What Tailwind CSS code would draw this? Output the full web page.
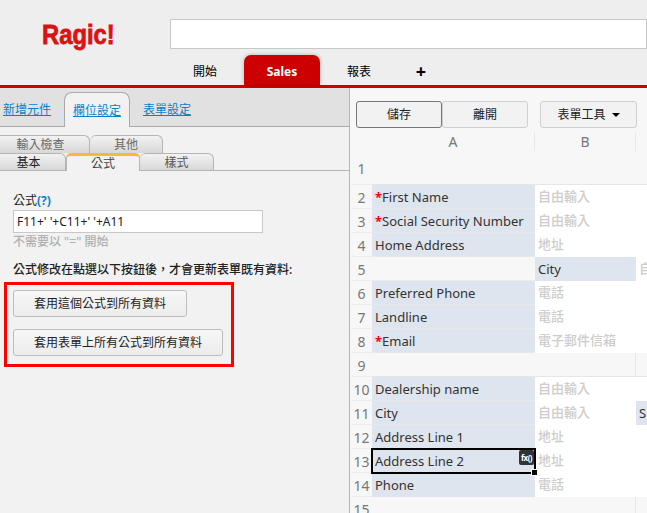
<!DOCTYPE html>
<html>
<head>
<meta charset="utf-8">
<script src="https://cdn.jsdelivr.net/npm/@tailwindcss/browser@4"></script>
</head>
<body class="w-[647px] h-[513px] overflow-hidden bg-[#f2f2f2] text-[13px] text-[#222] font-['Noto_Sans','Noto_Sans_CJK_TC',sans-serif]">
<header class="h-[88px] bg-[#eeeeee] border-b-[3px] border-[#cc0000] flex flex-col">
  <div class="h-[55px] flex items-start shrink-0">
    <div class="w-[170px] pt-[15px] pl-[42px] text-[28px] leading-[40px] font-bold text-[#dd1111] font-['Liberation_Sans',sans-serif] [-webkit-text-stroke:0.8px_#dd1111]"><span class="inline-block origin-left scale-x-[0.85]">Ragic!</span></div>
    <div class="mt-[19px] h-[30px] flex-1 bg-white border border-[#c8c8c8]"></div>
  </div>
  <nav class="flex items-stretch h-[30px] text-[12px] leading-[34px] text-black">
    <div class="ml-[193px] w-[24px] text-center whitespace-nowrap">開始</div>
    <div class="ml-[27px] w-[76px] bg-[#cc0000] rounded-t-[7px] text-white font-bold text-center shadow-[0_0_4px_rgba(0,0,0,0.25)]">Sales</div>
    <div class="ml-[27px] w-[24px] text-center whitespace-nowrap">報表</div>
    <div class="ml-[44px] w-[12px] text-center font-bold text-[18px] leading-[32px]">+</div>
  </nav>
</header>
<main class="flex h-[425px]">
  <aside class="w-[350px] shrink-0 border-r border-[#b5b5b5] flex flex-col">
    <div class="h-[39px] bg-[#e1e1e1] border-b border-[#aaaaaa] flex items-end text-[12px] shrink-0">
      <a class="ml-[3px] w-[48px] mb-[7px] text-[#0b7fc9] underline whitespace-nowrap">新增元件</a>
      <div class="ml-[13px] w-[66px] h-[35px] -mb-px bg-[#f2f2f2] border border-b-0 border-[#aaaaaa] rounded-t-[8px] flex items-center justify-center pt-[2px]">
        <a class="text-[#0b7fc9] underline whitespace-nowrap">欄位設定</a>
      </div>
      <a class="ml-[13px] w-[48px] mb-[7px] text-[#0b7fc9] underline whitespace-nowrap">表單設定</a>
    </div>
    <div class="pt-[8px] text-[12px] leading-[18px] shrink-0">
      <div class="flex h-[18px] text-[#666]">
        <div class="w-[90px] pr-[8px] bg-gradient-to-b from-[#f2f2f2] to-[#d8d8d8] border-r border-t border-[#b5b5b5] rounded-tr-[6px] text-center">輸入檢查</div>
        <div class="w-[73px] bg-gradient-to-b from-[#f2f2f2] to-[#d8d8d8] border-r border-t border-[#b5b5b5] rounded-t-[6px] text-center">其他</div>
      </div>
      <div class="flex h-[18px] border-b border-[#b5b5b5] text-[#444]">
        <div class="w-[66px] pr-[8px] bg-gradient-to-b from-[#f2f2f2] to-[#d8d8d8] border-r border-t border-[#b5b5b5] rounded-tr-[6px] text-center text-[#222]">基本</div>
        <div class="w-[74px] h-[18px] bg-[#f2f2f2] border-x border-[#b5b5b5] border-t-[3px] border-t-[#f5b942] rounded-t-[5px] text-center leading-[15px]">公式</div>
        <div class="w-[74px] bg-gradient-to-b from-[#f2f2f2] to-[#d8d8d8] border-r border-t border-[#b5b5b5] rounded-t-[6px] text-center text-[#555]">樣式</div>
      </div>
    </div>
    <div class="pl-[13px] pt-[22px] text-[12px] leading-[16px]">
      <div class="h-[16px]">公式<span class="text-[#0b7fc9] font-bold">(?)</span></div>
      <div class="w-[250px] h-[23px] mt-[1px] bg-white border border-[#c8c8c8] pl-[3px] leading-[21px] text-[#222]">F11+' '+C11+' '+A11</div>
      <div class="mt-[1px] text-[#b0b0b0] h-[16px] font-medium">不需要以 "=" 開始</div>
      <div class="mt-[12px] h-[16px] font-medium text-[#222]">公式修改在點選以下按鈕後，才會更新表單既有資料:</div>
      <div class="mt-[4px] -ml-[9px] w-[230px] h-[85px] border-[3px] border-[#ff0000] pl-[6px] pt-[5px] flex flex-col items-start gap-[12px]">
        <button class="w-[174px] h-[27px] bg-gradient-to-b from-[#f7f7f7] to-[#ececec] border border-[#bdbdbd] rounded-[3px] text-[12px]">套用這個公式到所有資料</button>
        <button class="w-[210px] h-[27px] bg-gradient-to-b from-[#f7f7f7] to-[#ececec] border border-[#bdbdbd] rounded-[3px] text-[12px]">套用表單上所有公式到所有資料</button>
      </div>
    </div>
  </aside>
  <section class="flex-1 bg-[#f7f7f7] pl-[1px] min-w-0 overflow-hidden">
    <div class="h-[44px] flex items-start pt-[13px] pl-[5px] text-[12px]">
      <button class="w-[86px] h-[27px] pt-[1px] bg-[#f2f2f2] border border-[#777] rounded-[3px]">儲存</button>
      <button class="w-[86px] h-[27px] pt-[1px] bg-[#f2f2f2] border border-[#cfcfcf] rounded-[3px]">離開</button>
      <button class="ml-[12px] w-[97px] h-[27px] pt-[1px] bg-[#f2f2f2] border border-[#cfcfcf] rounded-[3px] flex items-center justify-center gap-[6px]">表單工具<span class="w-0 h-0 border-x-[4px] border-x-transparent border-t-[4px] border-t-black"></span></button>
    </div>
    <div class="grid grid-cols-[21px_163px_101px_100px] grid-rows-[19px_34px_repeat(14,24px)] text-[13px] leading-[25px] text-[#333] whitespace-nowrap">
      <div></div>
      <div class="border-r border-[#e8e8e8] text-center text-[#777] text-[14px] leading-[19px]">A</div>
      <div class="border-r border-[#e8e8e8] text-center text-[#777] text-[14px] leading-[19px]">B</div>
      <div></div>

      <div class="text-center text-[#777] text-[14px] leading-[36px] border-b border-[#ececec]">1</div>
      <div class="col-span-3 border-b border-[#e6e6e6]"></div>

      <div class="text-center text-[#777] text-[14px] border-b border-[#ececec]">2</div>
      <div class="pl-[3px] bg-[#dfe5ee] border-b border-[#e8e8e8]"><span class="text-[#ff0000] font-bold">*</span>First Name</div>
      <div class="pl-[3px] bg-white text-[#cccccc] font-medium leading-[23px]">自由輸入</div>
      <div class="bg-white"></div>

      <div class="text-center text-[#777] text-[14px] border-b border-[#ececec]">3</div>
      <div class="pl-[3px] bg-[#dfe5ee] border-b border-[#e8e8e8]"><span class="text-[#ff0000] font-bold">*</span>Social Security Number</div>
      <div class="pl-[3px] bg-white text-[#cccccc] font-medium leading-[23px]">自由輸入</div>
      <div class="bg-white"></div>

      <div class="text-center text-[#777] text-[14px] border-b border-[#ececec]">4</div>
      <div class="pl-[3px] bg-[#dfe5ee] border-b border-[#e8e8e8]">Home Address</div>
      <div class="pl-[3px] bg-white text-[#cccccc] font-medium leading-[23px]">地址</div>
      <div class="bg-white"></div>

      <div class="text-center text-[#777] text-[14px] border-b border-[#ececec]">5</div>
      <div class="border-b border-[#ececec]"></div>
      <div class="pl-[3px] bg-[#dfe5ee]">City</div>
      <div class="pl-[3px] bg-white text-[#cccccc] font-medium leading-[23px]">自由輸入</div>

      <div class="text-center text-[#777] text-[14px] border-b border-[#ececec]">6</div>
      <div class="pl-[3px] bg-[#dfe5ee] border-b border-[#e8e8e8]">Preferred Phone</div>
      <div class="pl-[3px] bg-white text-[#cccccc] font-medium leading-[23px]">電話</div>
      <div class="bg-white"></div>

      <div class="text-center text-[#777] text-[14px] border-b border-[#ececec]">7</div>
      <div class="pl-[3px] bg-[#dfe5ee] border-b border-[#e8e8e8]">Landline</div>
      <div class="pl-[3px] bg-white text-[#cccccc] font-medium leading-[23px]">電話</div>
      <div class="bg-white"></div>

      <div class="text-center text-[#777] text-[14px] border-b border-[#ececec]">8</div>
      <div class="pl-[3px] bg-[#dfe5ee] border-b border-[#e8e8e8]"><span class="text-[#ff0000] font-bold">*</span>Email</div>
      <div class="pl-[3px] bg-white text-[#cccccc] font-medium leading-[23px]">電子郵件信箱</div>
      <div class="bg-white"></div>

      <div class="text-center text-[#777] text-[14px] border-b border-[#ececec]">9</div>
      <div class="border-b border-[#e6e6e6]"></div>
      <div class="border-b border-r border-[#e6e6e6]"></div>
      <div class="border-b border-[#e6e6e6]"></div>

      <div class="text-center text-[#777] text-[14px] border-b border-[#ececec]">10</div>
      <div class="pl-[3px] bg-[#dfe5ee] border-b border-[#e8e8e8]">Dealership name</div>
      <div class="pl-[3px] bg-white text-[#cccccc] font-medium leading-[23px]">自由輸入</div>
      <div class="bg-white"></div>

      <div class="text-center text-[#777] text-[14px] border-b border-[#ececec]">11</div>
      <div class="pl-[3px] bg-[#dfe5ee] border-b border-[#e8e8e8]">City</div>
      <div class="pl-[3px] bg-white text-[#cccccc] font-medium leading-[23px]">自由輸入</div>
      <div class="pl-[3px] bg-[#dfe5ee]">S</div>

      <div class="text-center text-[#777] text-[14px] border-b border-[#ececec]">12</div>
      <div class="pl-[3px] bg-[#dfe5ee] border-b border-[#e8e8e8]">Address Line 1</div>
      <div class="pl-[3px] bg-white text-[#cccccc] font-medium leading-[23px]">地址</div>
      <div class="bg-white"></div>

      <div class="text-center text-[#777] text-[14px] border-b border-[#ececec]">13</div>
      <div class="relative pl-[3px] bg-[#dfe5ee]">Address Line 2
        <div class="absolute -inset-x-px -top-px -bottom-px border-2 border-black"></div>
        <div class="absolute right-[1px] top-[1px] w-[15px] h-[15px] bg-[#333] rounded-[2px] text-white text-[8px] leading-[15px] font-bold text-center tracking-[-0.5px]">fx()</div>
        <div class="absolute -right-[3px] -bottom-[3px] w-[5px] h-[5px] bg-black border border-white box-content"></div>
      </div>
      <div class="pl-[3px] bg-white text-[#cccccc] font-medium leading-[23px]">地址</div>
      <div class="bg-white"></div>

      <div class="text-center text-[#777] text-[14px] border-b border-[#ececec]">14</div>
      <div class="pl-[3px] bg-[#dfe5ee]">Phone</div>
      <div class="pl-[3px] bg-white text-[#cccccc] font-medium leading-[23px]">電話</div>
      <div class="bg-white"></div>

      <div class="text-center text-[#777] text-[14px]">15</div>
      <div></div>
      <div class="border-r border-[#e6e6e6]"></div>
      <div></div>
    </div>
  </section>
</main>
</body>
</html>
